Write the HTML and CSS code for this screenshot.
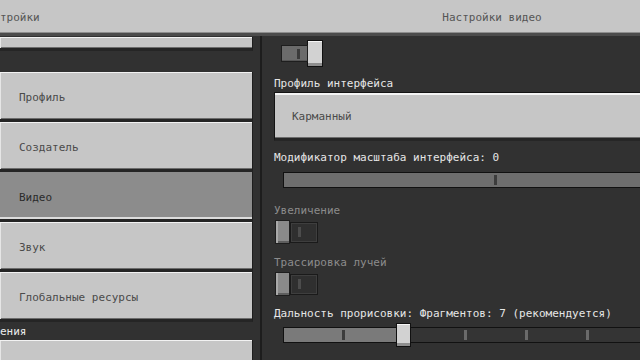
FILE: index.html
```html
<!DOCTYPE html>
<html>
<head>
  <title>Настройки видео</title>
  <link rel="stylesheet" href="styles.css">
</head>
<body>
  <header class="topbar">
    <div class="topbar-left">тройки</div>
    <div class="topbar-title">Настройки видео</div>
  </header>

  <div class="main">
    <aside class="side">
      <div class="nav-btn nav-cut"></div>
      <div class="nav-btn">Профиль</div>
      <div class="nav-btn">Создатель</div>
      <div class="nav-btn active">Видео</div>
      <div class="nav-btn">Звук</div>
      <div class="nav-btn">Глобальные ресурсы</div>
      <div class="side-heading">ения</div>
      <div class="nav-btn"></div>
    </aside>

    <section class="content">
      <div class="toggle on">
        <span class="track"><i class="tick"></i></span>
        <span class="knob"></span>
      </div>

      <div class="label label-profile">Профиль интерфейса</div>
      <div class="dropdown">Карманный</div>

      <div class="label label-scale">Модификатор масштаба интерфейса: 0</div>
      <div class="slider slider-scale">
        <i class="mark" style="left: 210px"></i>
      </div>

      <div class="label label-off label-zoom">Увеличение</div>
      <div class="toggle off">
        <span class="knob"></span>
        <span class="track"><i class="tick"></i></span>
      </div>

      <div class="label label-off label-ray">Трассировка лучей</div>
      <div class="toggle off">
        <span class="knob"></span>
        <span class="track"><i class="tick"></i></span>
      </div>

      <div class="label label-dist">Дальность прорисовки: Фрагментов: 7 (рекомендуется)</div>
      <div class="slider slider-dist">
        <span class="fill" style="width: 113px"></span>
        <i class="mark mark-fill" style="left: 58px"></i>
        <i class="mark" style="left: 180px"></i>
        <i class="mark" style="left: 241px"></i>
        <i class="mark" style="left: 302px"></i>
        <span class="thumb" style="left: 112px"></span>
      </div>
    </section>
  </div>
</body>
</html>
```

FILE: styles.css
```css
* { box-sizing: border-box; }
html, body { margin: 0; overflow: hidden; }
body { width: 640px; height: 360px; background: #313131; font-family: "DejaVu Sans Mono", "Liberation Mono", monospace; font-size: 11px; }

/* top bar */
.topbar { display: grid; grid-template-columns: 263px 1fr; height: 36px; padding-top: 3px; background: #c6c6c6; border-bottom: 3px solid #4c4c4c; box-shadow: inset 0 -1px 0 #8e8e8e; color: #555; line-height: 30px; }
.topbar-title { padding-left: 81px; text-align: center; }

.main { display: flex; height: 324px; }

/* left column */
.side { width: 262px; flex-shrink: 0; border-right: 2px solid #1d1d1d; overflow: hidden; }
.nav-btn { width: 253px; height: 50px; padding: 5px 0 0 19px; background: #c6c6c6; border-right: 1px solid #1e1e1e; border-bottom: 3px solid #252525; box-shadow: inset 0 1px 0 #f2f2f2, inset 1px 0 0 #e6e6e6, inset 0 -1px 0 #6c6c6c; color: #4a4a4a; line-height: 42px; }
.nav-btn.active { background: #8c8c8c; color: #2a2a2a; box-shadow: inset 0 -2px 0 #dcdcdc; }
.nav-cut { height: 14px; margin: 1px 0 21px; }
.side-heading { height: 18px; padding-top: 1px; line-height: 17px; color: #ececec; }

/* right column */
.content { flex: 1; min-width: 0; display: flex; flex-direction: column; align-items: flex-start; padding: 4px 0 0 12px; overflow: hidden; }
.label { height: 12px; padding-top: 1px; line-height: 12px; color: #e6e6e6; white-space: nowrap; }
.label-off { color: #8c8c8c; }
.label-profile { margin-top: 9px; padding-top: 2px; }
.label-scale { margin-top: 10px; }
.label-zoom { margin-top: 16px; }
.label-ray { margin-top: 12px; }
.label-dist { margin-top: 11px; }

.dropdown { align-self: stretch; height: 49px; margin-top: 4px; padding: 4px 0 0 17px; background: #c6c6c6; border-top: 1px solid #141414; border-left: 1px solid #141414; border-bottom: 3px solid #262626; box-shadow: inset 0 2px 0 #f4f4f4, inset 0 -1px 0 #6c6c6c; color: #4a4a4a; line-height: 40px; }

/* toggles */
.toggle { display: flex; align-items: center; }
.toggle .track { position: relative; display: block; }
.toggle .tick { position: absolute; top: 50%; left: 8px; width: 3px; height: 10px; margin-top: -5px; }
.toggle .knob { display: block; }

.toggle.on { height: 27px; margin-left: 7px; }
.toggle.on .track { width: 27px; height: 17px; background: #6b6b6b; border: 1px solid #1e1e1e; box-shadow: inset 0 -1px 0 #555; }
.toggle.on .tick { left: 15px; background: #3a3a3a; }
.toggle.on .knob { width: 16px; height: 27px; margin-left: -1px; background: #d2d2d2; border: 1px solid #111; box-shadow: inset 0 -3px 0 #8e8e8e, inset 0 1px 0 #f6f6f6; }

.toggle.off { height: 24px; margin: 4px 0 0 1px; }
.toggle.off .knob { width: 15px; height: 24px; background: #8a8a8a; border: 1px solid #1e1e1e; box-shadow: inset 2px 0 0 #a9a9a9, inset 0 -2px 0 #5e5e5e; }
.toggle.off .track { width: 28px; height: 21px; background: #2f2f2f; border: 1px solid #1a1a1a; box-shadow: inset 0 0 0 1px #3e3e3e; }
.toggle.off .tick { left: 7px; background: #4c4c4c; }

/* sliders */
.slider { position: relative; display: flex; align-self: stretch; height: 16px; margin-left: 9px; border: 1px solid #111; border-right: 0; }
.slider-scale { margin-top: 9px; background: #6e6e6e; }
.slider-dist { margin-top: 8px; background: #343434; }
.slider .fill { display: block; height: 100%; background: #7a7a7a; }
.slider .mark { position: absolute; top: 2px; width: 3px; height: 10px; background: #6a6a6a; }
.slider-scale .mark, .slider .mark-fill { background: #3c3c3c; }
.slider .thumb { position: absolute; top: -5px; width: 15px; height: 24px; background: #d2d2d2; border: 1px solid #111; box-shadow: inset 0 -3px 0 #8e8e8e, inset 0 1px 0 #f6f6f6; }
```
